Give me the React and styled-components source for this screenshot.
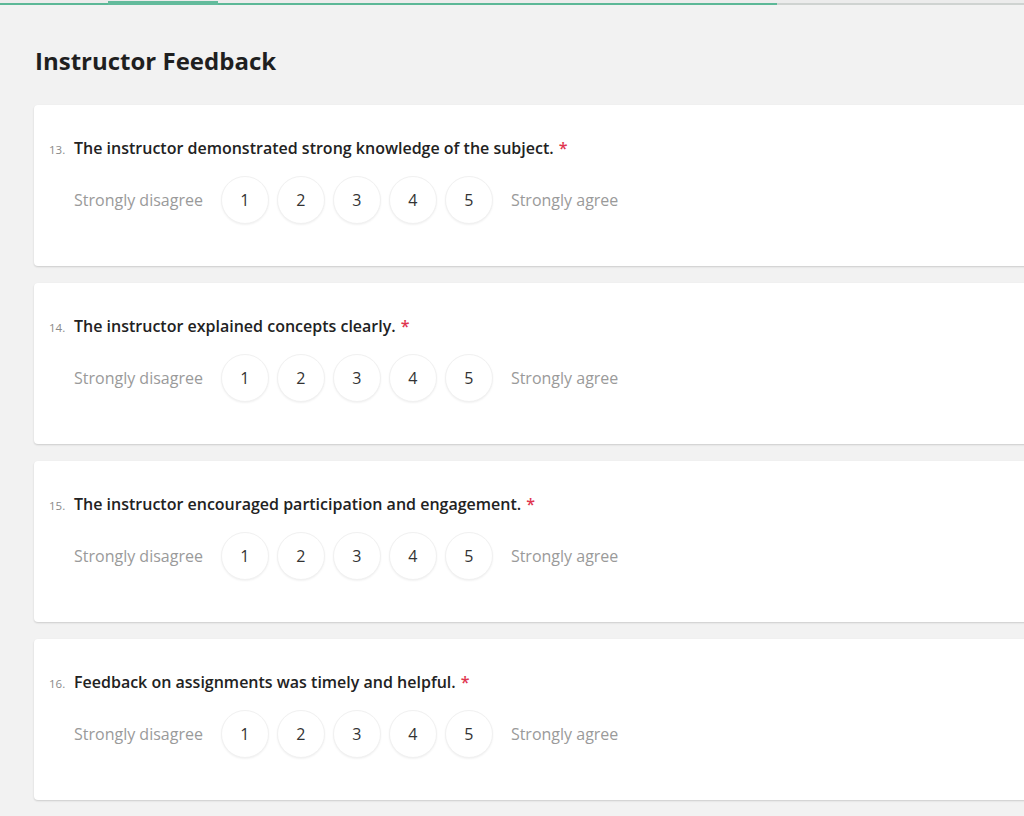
import React from 'react';
import styled, { createGlobalStyle } from 'styled-components';

const GlobalStyle = createGlobalStyle`
  html, body {
    margin: 0;
    padding: 0;
    background: #f2f2f2;
    overflow: hidden;
  }

  body {
    font-family: "Open Sans", "Noto Sans", sans-serif;
    color: #222222;
  }
`;

const Page = styled.div`
  width: 1024px;
  height: 816px;
  overflow: hidden;
`;

const Progress = styled.div`
  position: relative;
  height: 5px;
  background: linear-gradient(#ececec 0 3px, #cfd3d1 3px 5px);
`;

const ProgressFill = styled.div`
  height: 100%;
  background: linear-gradient(transparent 0 3px, #5cb897 3px 5px);
`;

const ProgressMarker = styled.div`
  position: absolute;
  top: 1px;
  left: 108px;
  width: 110px;
  height: 4px;
  background: #63bb9c;
`;

const Content = styled.main`
  padding: 40px 0 0 34px;
`;

const Heading = styled.h1`
  margin: 0 0 28px 1px;
  font-size: 24px;
  line-height: 32px;
  font-weight: 700;
  color: #1f1f1f;
`;

const List = styled.div`
  display: flex;
  flex-direction: column;
  gap: 17px;
`;

const Card = styled.section`
  width: 1040px;
  height: 161px;
  box-sizing: border-box;
  padding: 33px 15px 0;
  background: #ffffff;
  border-radius: 4px;
  box-shadow: 0 1px 2px rgba(0, 0, 0, 0.16);
`;

const Question = styled.div`
  display: flex;
  align-items: baseline;
  font-size: 16px;
  line-height: 20px;
  font-weight: 600;
  color: #222222;
`;

const Number = styled.span`
  width: 25px;
  font-size: 11.5px;
  font-weight: 400;
  color: #8a8a8a;
`;

const Required = styled.span`
  margin-left: 5px;
  color: #e0364f;
`;

const Scale = styled.div`
  display: flex;
  align-items: center;
  gap: 8px;
  margin-top: 16px;
  padding-left: 25px;
`;

const ScaleLabel = styled.span`
  font-size: 16px;
  color: #9a9a9a;
  margin: ${p => (p.end ? '0 0 0 10px' : '0 10px 0 0')};
`;

const Option = styled.button`
  width: 48px;
  height: 48px;
  padding: 0;
  border: 1px solid #f1f1f1;
  border-radius: 50%;
  background: #ffffff;
  box-shadow: 0 1px 2px rgba(0, 0, 0, 0.06);
  font-family: inherit;
  font-size: 16px;
  color: #333333;
  cursor: pointer;
`;

const questions = [
  { n: 13, text: 'The instructor demonstrated strong knowledge of the subject.' },
  { n: 14, text: 'The instructor explained concepts clearly.' },
  { n: 15, text: 'The instructor encouraged participation and engagement.' },
  { n: 16, text: 'Feedback on assignments was timely and helpful.' },
];

const App = () => (
  <Page>
    <GlobalStyle />
    <Progress>
      <ProgressFill style={{ width: `${(777 / 1024) * 100}%` }} />
      <ProgressMarker />
    </Progress>
    <Content>
      <Heading>Instructor Feedback</Heading>
      <List>
        {questions.map(q => (
          <Card key={q.n}>
            <Question>
              <Number>{q.n}.</Number>
              {q.text}
              <Required>*</Required>
            </Question>
            <Scale>
              <ScaleLabel>Strongly disagree</ScaleLabel>
              {[1, 2, 3, 4, 5].map(v => (
                <Option key={v}>{v}</Option>
              ))}
              <ScaleLabel end>Strongly agree</ScaleLabel>
            </Scale>
          </Card>
        ))}
      </List>
    </Content>
  </Page>
);

export default App;
